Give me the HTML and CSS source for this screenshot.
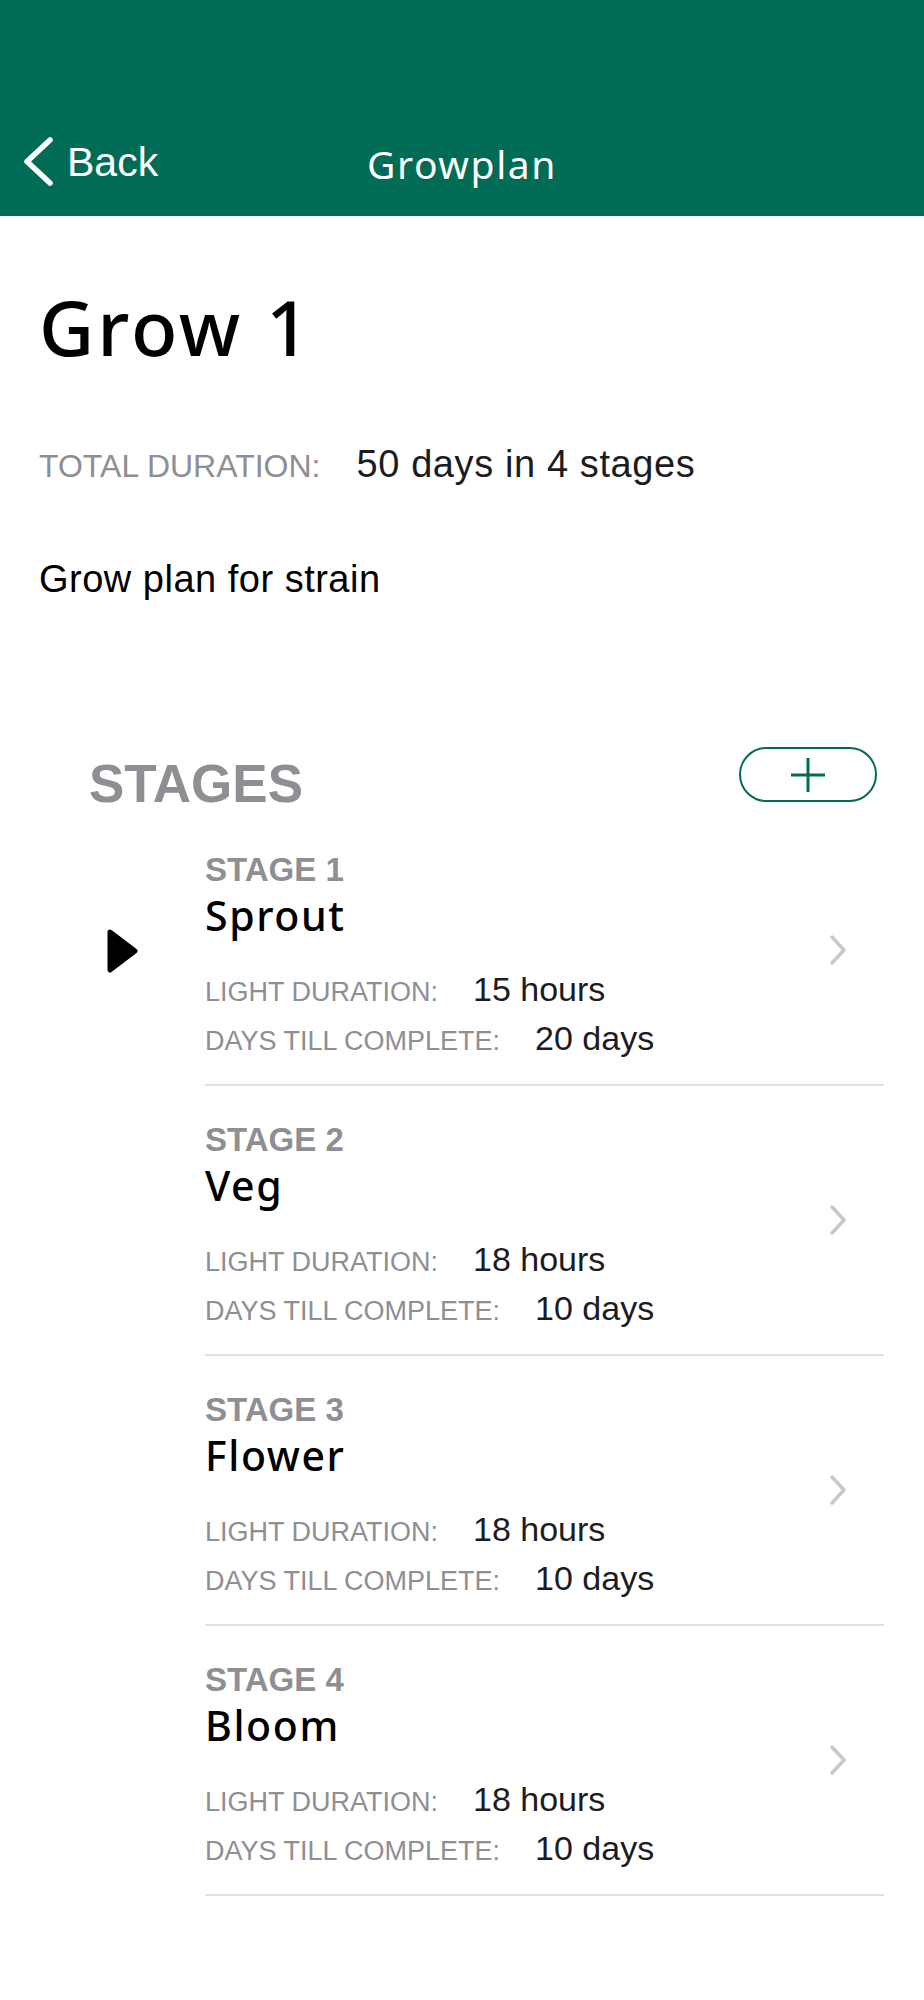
FILE: index.html
```html
<!DOCTYPE html>
<html lang="en">
<head>
    <meta charset="UTF-8">
    <meta name="viewport" content="width=device-width, initial-scale=1.0">
    <title>Growplan</title>
    <link rel="stylesheet" href="styles.css">
</head>
<body>
    <header class="navbar">
        <a class="back" href="#">
            <svg class="back-icon" width="34" height="54" viewBox="0 0 34 54">
                <path d="M28 5 L5 26.5 L28 48" fill="none" stroke="#fff" stroke-width="5.5" stroke-linecap="round" stroke-linejoin="round"/>
            </svg>
            <span>Back</span>
        </a>
        <div class="nav-title">Growplan</div>
        <div></div>
    </header>

    <main class="content">
        <h1 class="plan-name">Grow 1</h1>

        <div class="total">
            <span class="label">TOTAL DURATION:</span>
            <span class="value">50 days in 4 stages</span>
        </div>

        <p class="description">Grow plan for strain</p>
    </main>

    <section class="stages">
        <div class="stages-head">
            <h2>STAGES</h2>
            <button class="add-btn" aria-label="Add stage">
                <svg width="36" height="36" viewBox="0 0 36 36">
                    <path d="M18 1 V35 M1 18 H35" stroke="#006c56" stroke-width="3"/>
                </svg>
            </button>
        </div>

        <div class="stage">
            <div class="marker">
                <!-- current stage -->
                <svg width="32" height="46" viewBox="0 0 32 46">
                    <path d="M4 4 L29 23 L4 42 Z" fill="#000" stroke="#000" stroke-width="5" stroke-linejoin="round"/>
                </svg>
            </div>
            <div class="stage-body">
                <div class="stage-info">
                    <div class="stage-num">STAGE 1</div>
                    <div class="stage-name">Sprout</div>
                    <div class="row">
                        <span class="label">LIGHT DURATION:</span>
                        <span class="value">15 hours</span>
                    </div>
                    <div class="row">
                        <span class="label">DAYS TILL COMPLETE:</span>
                        <span class="value">20 days</span>
                    </div>
                </div>
                <svg class="chevron" width="18" height="32" viewBox="0 0 18 32">
                    <path d="M3 3 L15 16 L3 29" fill="none" stroke="#c7c7cc" stroke-width="3.5" stroke-linecap="round" stroke-linejoin="round"/>
                </svg>
            </div>
        </div>

        <div class="stage">
            <div class="marker"></div>
            <div class="stage-body">
                <div class="stage-info">
                    <div class="stage-num">STAGE 2</div>
                    <div class="stage-name">Veg</div>
                    <div class="row">
                        <span class="label">LIGHT DURATION:</span>
                        <span class="value">18 hours</span>
                    </div>
                    <div class="row">
                        <span class="label">DAYS TILL COMPLETE:</span>
                        <span class="value">10 days</span>
                    </div>
                </div>
                <svg class="chevron" width="18" height="32" viewBox="0 0 18 32">
                    <path d="M3 3 L15 16 L3 29" fill="none" stroke="#c7c7cc" stroke-width="3.5" stroke-linecap="round" stroke-linejoin="round"/>
                </svg>
            </div>
        </div>

        <div class="stage">
            <div class="marker"></div>
            <div class="stage-body">
                <div class="stage-info">
                    <div class="stage-num">STAGE 3</div>
                    <div class="stage-name">Flower</div>
                    <div class="row">
                        <span class="label">LIGHT DURATION:</span>
                        <span class="value">18 hours</span>
                    </div>
                    <div class="row">
                        <span class="label">DAYS TILL COMPLETE:</span>
                        <span class="value">10 days</span>
                    </div>
                </div>
                <svg class="chevron" width="18" height="32" viewBox="0 0 18 32">
                    <path d="M3 3 L15 16 L3 29" fill="none" stroke="#c7c7cc" stroke-width="3.5" stroke-linecap="round" stroke-linejoin="round"/>
                </svg>
            </div>
        </div>

        <div class="stage">
            <div class="marker"></div>
            <div class="stage-body">
                <div class="stage-info">
                    <div class="stage-num">STAGE 4</div>
                    <div class="stage-name">Bloom</div>
                    <div class="row">
                        <span class="label">LIGHT DURATION:</span>
                        <span class="value">18 hours</span>
                    </div>
                    <div class="row">
                        <span class="label">DAYS TILL COMPLETE:</span>
                        <span class="value">10 days</span>
                    </div>
                </div>
                <svg class="chevron" width="18" height="32" viewBox="0 0 18 32">
                    <path d="M3 3 L15 16 L3 29" fill="none" stroke="#c7c7cc" stroke-width="3.5" stroke-linecap="round" stroke-linejoin="round"/>
                </svg>
            </div>
        </div>
    </section>
</body>
</html>
```

FILE: styles.css
```css
body {
    margin: 0;
    background-color: #ffffff;
    font-family: 'Liberation Sans', Arial, sans-serif;
    color: #000;
}
.navbar {
    height: 216px;
    box-sizing: border-box;
    padding-bottom: 27px;
    background-color: #006c56; /* app green */
    display: grid;
    grid-template-columns: 1fr auto 1fr;
    align-items: end;
    color: #fff;
}
.back {
    display: flex;
    align-items: center;
    padding-left: 22px;
    color: #fff;
    text-decoration: none;
    font-size: 41px;
    line-height: 50px;
}
.back-icon {
    margin-right: 11px;
}
.nav-title {
    font-family: 'Noto Sans', sans-serif;
    font-size: 39px;
    line-height: 50px;
    letter-spacing: 1.6px;
}
.content {
    padding: 0 39px;
}
.plan-name {
    margin: 66px 0 0;
    font-family: 'Noto Sans', sans-serif;
    font-weight: 500;
    font-size: 76px;
    line-height: 90px;
    letter-spacing: 3px;
}
.total {
    margin-top: 69px;
    display: flex;
    align-items: baseline;
    height: 46px;
    line-height: 46px;
}
.total .label {
    font-size: 32px;
    color: #8e8e93;
    margin-right: 36px;
}
.total .value {
    font-size: 38px;
    letter-spacing: 0.6px;
    color: #1c1c1e;
}
.description {
    margin: 69px 0 0;
    font-size: 38px;
    line-height: 46px;
    letter-spacing: 0.5px;
}
.stages {
    margin-top: 145px;
}
.stages-head {
    display: flex;
    justify-content: space-between;
    align-items: flex-start;
    padding: 0 47px 0 89px;
    margin-bottom: 2px;
}
.stages-head h2 {
    margin: 7px 0 0;
    font-size: 53px;
    line-height: 60px;
    color: #8e8e93;
}
.add-btn {
    width: 138px;
    height: 55px;
    border: 2px solid #006c56;
    border-radius: 28px;
    background: #fff;
    padding: 0;
    display: flex;
    align-items: center;
    justify-content: center;
    cursor: pointer;
}
.stage {
    display: flex;
    align-items: center;
}
.marker {
    width: 205px;
    flex-shrink: 0;
    box-sizing: border-box;
    padding-left: 106px;
    display: flex;
    align-items: center;
}
.stage-body {
    flex: 1;
    margin-right: 40px;
    padding-right: 37px;
    display: flex;
    align-items: center;
    justify-content: space-between;
    border-bottom: 2px solid #e2e2e4;
}
.stage-info {
    padding: 36px 0 26px;
}
.stage-num {
    font-size: 33px;
    font-weight: bold;
    line-height: 36px;
    color: #8e8e93;
}
.stage-name {
    margin-top: 3px;
    font-family: 'Noto Sans', sans-serif;
    font-weight: 500;
    font-size: 41px;
    line-height: 48px;
    letter-spacing: 1.6px;
}
.row {
    display: flex;
    align-items: baseline;
    height: 40px;
    line-height: 40px;
    margin-top: 9px;
}
.stage-name + .row {
    margin-top: 30px;
}
.row .label {
    font-size: 27px;
    color: #8e8e93;
    margin-right: 35px;
}
.row .value {
    font-size: 34px;
    color: #1c1c1e;
}
```
